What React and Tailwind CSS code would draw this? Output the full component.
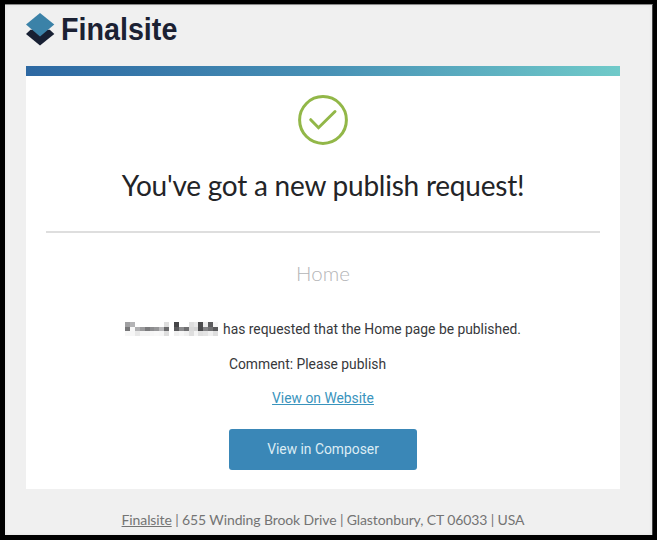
import React from 'react';

// Mosaic over the requester's name, one grey level per cell
const NAME_MOSAIC = [
  ['#a0a0a2', '#b4b4b6', '#fff', '#fff', '#fff', '#fff', '#fff', '#fff', '#dedede', '#fff', '#454547', '#fff', '#fff', '#dedede', '#e8e8e8', '#4b4b4d', '#ececec', '#5c5c5e', '#f6f6f6'],
  ['#777779', '#f8f8f8', '#b0b0b2', '#9a9a9c', '#7a7a7c', '#8c8c8e', '#969698', '#b8b8ba', '#69696b', '#fff', '#5a5a5c', '#8c8c8e', '#6e6e70', '#d8d8d8', '#d4d4d4', '#4a4a4c', '#838385', '#707072', '#59595b'],
  ['#f6f6f6', '#f6f6f6', '#e8e8e8', '#f4f4f4', '#f4f4f4', '#f6f6f6', '#f8f8f8', '#f6f6f6', '#dedede', '#fff', '#f0f0f0', '#f6f6f6', '#f0f0f0', '#dedede', '#f4f4f4', '#e0e0e0', '#e4e4e4', '#f0f0f0', '#dedede'],
];

function Logo() {
  return (
    <div className="flex h-[34px] items-center">
      <svg className="h-[34px] w-[29px] shrink-0" viewBox="0 0 29 34" fill="none">
        <path d="M4.5 17.8L0 21.9L14 33.4L28.3 21.9L23.8 17.8Z" fill="#182033" />
        <path d="M14 1L28.3 12.6L14 24.5L0 12.6Z" fill="#3b82a8" />
      </svg>
      <span className="ml-[6px] origin-left scale-x-[0.925] pt-px font-['Liberation_Sans',sans-serif] text-[31px] leading-[34px] font-bold text-[#1b2133]">Finalsite</span>
    </div>
  );
}

function RedactedName() {
  return (
    <span className="mr-[5px] grid w-[93px] grid-cols-[repeat(19,minmax(0,1fr))]">
      {NAME_MOSAIC.flat().map((color, i) => (
        <span key={i} className="h-[4.5px]" style={{ backgroundColor: color }} />
      ))}
    </span>
  );
}

function App() {
  return (
    <div className="h-[540px] w-[657px] bg-black pt-[4px] pl-[5px]">
      <div className="h-[531px] w-[648px] overflow-hidden border-t border-r border-t-[#888] border-r-[#444] bg-[#f0f0f0] pt-[7px] pl-[21px] shadow-[inset_0_0_4px_rgba(0,0,0,0.06)]">
        <Logo />

        <div className="mt-[20px] h-[10px] w-[594px] bg-linear-to-r from-[#2d68a2] via-[#4790b5] to-[#70cac9]" />
        <div className="flex h-[413px] w-[594px] flex-col items-center bg-white px-[20px] pt-[19px]">
          <svg className="h-[50px] w-[50px] shrink-0" viewBox="0 0 50 50" fill="none" stroke="#92b748" strokeWidth="3">
            <circle cx="25" cy="25" r="23.4" />
            <path d="M12.7 24.7L20.5 32.7L37 16.5" strokeLinecap="round" strokeLinejoin="miter" />
          </svg>
          <h1 className="mt-[22px] font-['Lato',sans-serif] text-[28px] leading-[36px] tracking-[-0.23px] whitespace-nowrap text-[#232427]">You've got a new publish request!</h1>
          <hr className="mt-[28px] h-[2px] w-full shrink-0 border-0 bg-[#dedede]" />

          <h2 className="mt-[26px] font-['Lato',sans-serif] text-[20.5px] leading-[28px] font-light text-[#b4b5b7]">Home</h2>

          <div className="mt-[32px] flex h-[20px] items-center font-['Roboto',sans-serif] text-[13.85px] whitespace-nowrap text-[#37383b]">
            <RedactedName />
            <span>has requested that the Home page be published.</span>
          </div>
          <div className="mt-[15px] mr-[31px] font-['Roboto',sans-serif] text-[13.85px] leading-[20px] text-[#37383b]">Comment: Please publish</div>
          <a href="#website" className="mt-[14px] font-['Roboto',sans-serif] text-[13.85px] leading-[20px] text-[#3a94bd] underline">View on Website</a>
          <a href="#composer" className="mt-[21px] flex h-[40.5px] w-[188px] items-center justify-center rounded-[3px] bg-[#3a87b7] font-['Roboto',sans-serif] text-[13.85px] text-[#dcecf4]">
            View in Composer
          </a>
        </div>

        <p className="mt-[21px] w-[594px] text-center font-['Lato',sans-serif] text-[14px] leading-[20px] tracking-[-0.11px] whitespace-nowrap text-[#747474]">
          <a href="#finalsite" className="underline">Finalsite</a> | 655 Winding Brook Drive | Glastonbury, CT 06033 | USA
        </p>
      </div>
    </div>
  );
}

export default App;
